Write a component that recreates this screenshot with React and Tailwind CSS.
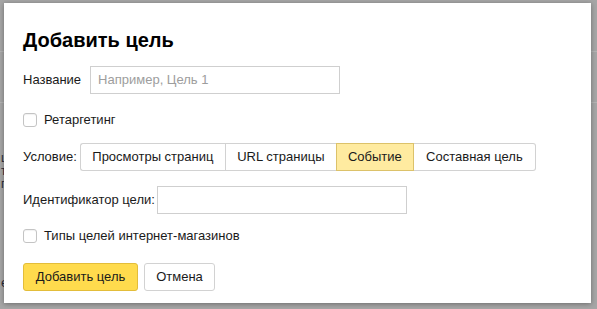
import React from "react";

function Checkbox({ label }) {
  return (
    <label className="flex items-center h-[28px]">
      <span className="w-[14px] h-[14px] rounded-[3px] border border-[#c4c4c4] bg-white shadow-[inset_0_1px_1px_rgba(0,0,0,0.06)]"></span>
      <span className="ml-[7px] text-[13px] text-[#1a1a1a]">{label}</span>
    </label>
  );
}

export default function App() {
  const segs = [
    { t: "Просмотры страниц", w: "w-[145px]", on: false },
    { t: "URL страницы", w: "w-[111px]", on: false },
    { t: "Событие", w: "w-[78px]", on: true },
    { t: "Составная цель", w: "w-[122px]", on: false },
  ];
  return (
    <div
      className="relative w-[597px] h-[309px] overflow-hidden bg-[#a6a6a6]"
      style={{ fontFamily: '"Liberation Sans", Arial, sans-serif' }}
    >
      {/* page behind overlay */}
      <div className="flex flex-col">
        <div className="h-[52px] border-b border-[#b4b4b4]"></div>
        <div className="h-[51px] border-b border-[#b4b4b4]"></div>
        <div className="flex flex-col pl-[1px] pt-[49px] text-[12px] leading-[13px] text-[#2a2a3a]">
          <span>ц</span>
          <span>т</span>
          <span>г</span>
        </div>
        <div className="pl-[1px] mt-[82px] text-[13px] text-[#2a2a3a]">е</div>
      </div>

      {/* dialog */}
      <div className="absolute left-[4px] top-[3px] w-[587px] h-[300px] bg-white shadow-[0_1px_5px_rgba(0,0,0,0.35)] px-[19px] pt-[25px] flex flex-col text-[13px] text-black">
        <h1 className="text-[20px] leading-[24px] font-bold text-black">Добавить цель</h1>

        <div className="mt-[14px] h-[28px] flex items-center">
          <span className="text-[#1a1a1a]">Название</span>
          <div className="ml-[9px] w-[250px] h-[28px] border border-[#cfcfcf] flex items-center px-[7px] text-[#9d9d9d]">
            Например, Цель 1
          </div>
        </div>

        <div className="mt-[12px]">
          <Checkbox label="Ретаргетинг" />
        </div>

        <div className="mt-[9px] h-[28px] flex items-center">
          <span className="text-[#1a1a1a]">Условие:</span>
          <div className="ml-[3px] flex h-[28px]">
            {segs.map((s, i) => (
              <div
                key={s.t}
                className={
                  s.w +
                  " h-[28px] flex items-center justify-center border-y " +
                  (i === 0 ? "border-l rounded-l-[3px] " : "") +
                  (i === segs.length - 1 ? "border-r rounded-r-[3px] " : "") +
                  (s.on
                    ? "bg-[#ffeba0] border-[#dcc26a] border-x text-[#1a1a1a]"
                    : "bg-white border-[#d2d2d2] text-[#1a1a1a]") +
                  (i === 1 ? " border-l" : "")
                }
              >
                {s.t}
              </div>
            ))}
          </div>
        </div>

        <div className="mt-[15px] h-[28px] flex items-center">
          <span className="text-[#1a1a1a]">Идентификатор цели:</span>
          <div className="ml-[2px] w-[250px] h-[28px] border border-[#cfcfcf]"></div>
        </div>

        <div className="mt-[8px]">
          <Checkbox label="Типы целей интернет-магазинов" />
        </div>

        <div className="mt-[13px] flex gap-[6px]">
          <button className="w-[115px] h-[28px] rounded-[3px] bg-[#ffdb4d] border border-[#e3bd3a] text-[13px] text-[#1a1a1a]">
            Добавить цель
          </button>
          <button className="w-[71px] h-[28px] rounded-[3px] bg-white border border-[#d2d2d2] text-[13px] text-[#1a1a1a]">
            Отмена
          </button>
        </div>
      </div>
    </div>
  );
}
